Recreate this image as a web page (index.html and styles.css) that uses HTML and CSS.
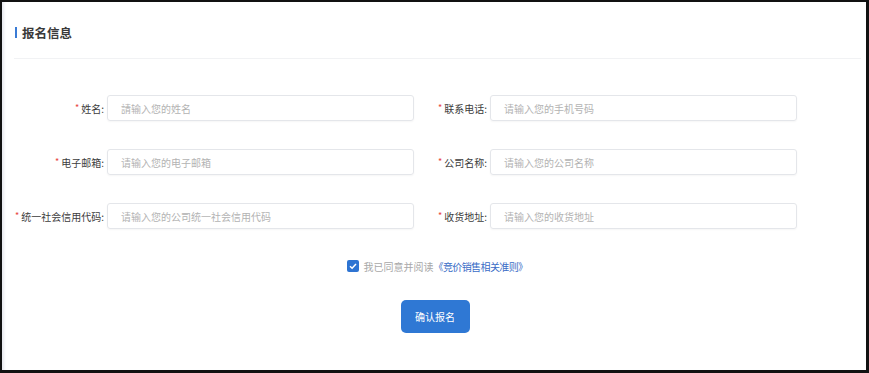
FILE: index.html
```html
<!DOCTYPE html>
<html lang="zh">
<head>
<meta charset="utf-8">
<link rel="stylesheet" href="styles.css">
</head>
<body>
<div class="frame">
  <div class="header"><span class="bar"></span><span class="title">报名信息</span></div>
  <div class="divider"></div>
  <div class="form">
    <label class="lbl"><span class="star">*</span>姓名:</label>
    <div class="input">請输入您的姓名</div>
    <label class="lbl"><span class="star">*</span>联系电话:</label>
    <div class="input">请输入您的手机号码</div>
    <label class="lbl"><span class="star">*</span>电子邮箱:</label>
    <div class="input">请输入您的电子邮箱</div>
    <label class="lbl"><span class="star">*</span>公司名称:</label>
    <div class="input">请输入您的公司名称</div>
    <label class="lbl"><span class="star">*</span>统一社会信用代码:</label>
    <div class="input">请输入您的公司统一社会信用代码</div>
    <label class="lbl"><span class="star">*</span>收货地址:</label>
    <div class="input">请输入您的收货地址</div>
  </div>
  <div class="agree">
    <span class="check"><svg width="12" height="12" viewBox="0 0 12 12"><path d="M3 6.2 L5.1 8.2 L9 3.9" fill="none" stroke="#fff" stroke-width="1.5"/></svg></span>
    <span class="agree-text">我已同意并阅读</span><span class="link">《竞价销售相关准则》</span>
  </div>
  <div class="actions"><button class="btn">确认报名</button></div>
</div>
</body>
</html>
```
FILE: styles.css
```css
* { box-sizing: border-box; }
html, body { margin: 0; padding: 0; background: #000; }
body { font-family: "Noto Sans CJK SC", "Noto Sans", sans-serif; }
.frame {
  width: 869px;
  height: 373px;
  background: #fff;
  border-style: solid;
  border-color: #111;
  border-width: 2px 3px 3px 2px;
  box-shadow: inset 4px 0 3px -2px #e6e8ee;
}
.header {
  height: 56px;
  display: flex;
  align-items: center;
  padding-left: 13px;
  padding-top: 4px;
}
.bar {
  width: 2px;
  height: 11px;
  background: #3a7bd5;
  margin-right: 5px;
}
.title {
  font-size: 12.5px;
  font-weight: bold;
  color: #3a3a3a;
}
.divider {
  height: 1px;
  background: #f1f2f4;
  margin: 0 5px 0 12px;
}
.form {
  display: grid;
  grid-template-columns: 93px 307px 76px 307px;
  grid-auto-rows: 26px;
  row-gap: 28px;
  margin: 36px 0 0 12px;
}
.lbl {
  display: flex;
  align-items: center;
  justify-content: flex-end;
  padding-right: 3px;
  font-size: 10px;
  color: #3c3c3c;
  white-space: nowrap;
}
.star {
  color: #e8453c;
  font-size: 9px;
  margin-right: 2px;
  position: relative;
  top: -1px;
}
.input {
  border: 1px solid #e4e6ea;
  border-radius: 3px;
  box-shadow: 0 1px 2px rgba(0,0,0,0.04);
  display: flex;
  align-items: center;
  padding-left: 13px;
  font-size: 10px;
  color: #b3b3b3;
}
.agree {
  margin-top: 30px;
  display: flex;
  justify-content: center;
  align-items: center;
  font-size: 10px;
  height: 14px;
  padding-left: 6px;
}
.check {
  width: 12px;
  height: 12px;
  background: #2e74d2;
  border-radius: 2px;
  display: inline-flex;
  margin-right: 5px;
}
.agree-text { color: #a8a8a8; }
.link { color: #3a6cc6; letter-spacing: -0.6px; }
.actions {
  margin-top: 27px;
  display: flex;
  justify-content: center;
}
.btn {
  width: 69px;
  height: 33px;
  border: none;
  border-radius: 5px;
  background: #2f78d4;
  color: #fff;
  font-family: inherit;
  font-size: 10px;
  padding: 0;
  margin-left: 2px;
}
```
